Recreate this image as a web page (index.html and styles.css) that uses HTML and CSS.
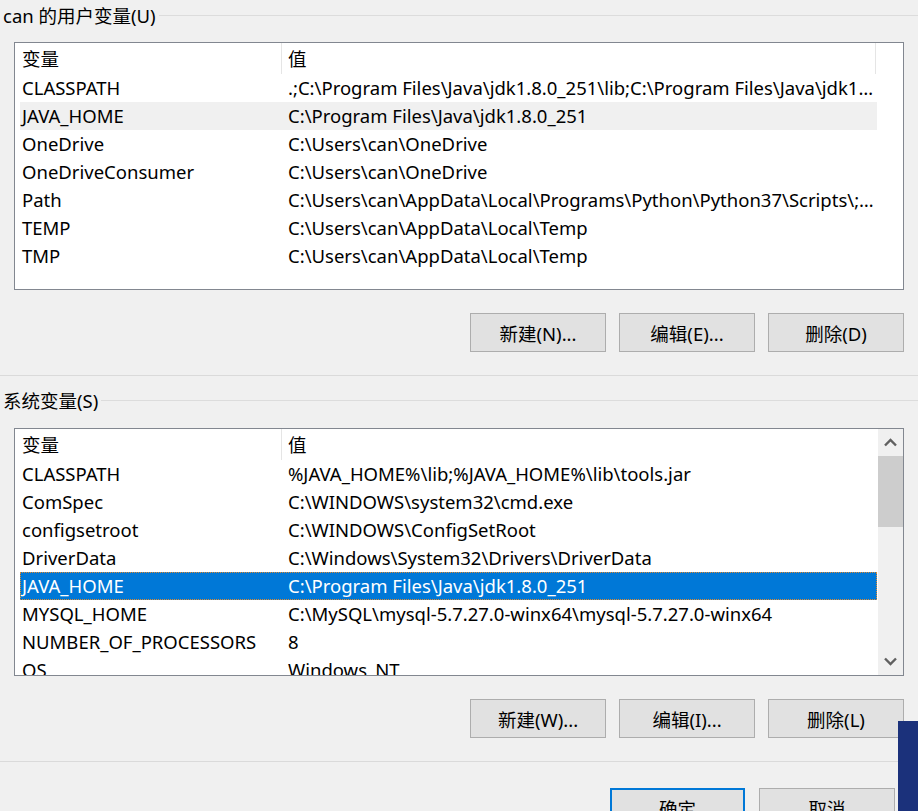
FILE: index.html
```html
<!DOCTYPE html>
<html lang="zh-CN">
<head>
<meta charset="utf-8">
<title>环境变量</title>
<link rel="stylesheet" href="styles.css">
</head>
<body>
<div class="group-title"><span class="gt-text">can 的用户变量(U)</span><span class="gt-line"></span></div>
<div class="listbox">
  <div class="list-main">
    <div class="row head"><div class="c1">变量</div><div class="c2">值</div></div>
    <div class="row"><div class="c1">CLASSPATH</div><div class="c2">.;C:\Program Files\Java\jdk1.8.0_251\lib;C:\Program Files\Java\jdk1.8.0_251\lib\tools.jar</div></div>
    <div class="row hover"><div class="c1">JAVA_HOME</div><div class="c2">C:\Program Files\Java\jdk1.8.0_251</div></div>
    <div class="row"><div class="c1">OneDrive</div><div class="c2">C:\Users\can\OneDrive</div></div>
    <div class="row"><div class="c1">OneDriveConsumer</div><div class="c2">C:\Users\can\OneDrive</div></div>
    <div class="row"><div class="c1">Path</div><div class="c2">C:\Users\can\AppData\Local\Programs\Python\Python37\Scripts\;C:\Users\can\AppData\Local\Programs\Python\Python37\</div></div>
    <div class="row"><div class="c1">TEMP</div><div class="c2">C:\Users\can\AppData\Local\Temp</div></div>
    <div class="row"><div class="c1">TMP</div><div class="c2">C:\Users\can\AppData\Local\Temp</div></div>
  </div>
  <div class="side-blank"></div>
</div>
<div class="btn-row">
  <button class="btn">新建(N)...</button>
  <button class="btn">编辑(E)...</button>
  <button class="btn">删除(D)</button>
</div>
<div class="sep sep-1"></div>
<div class="group-title gt-2"><span class="gt-text">系统变量(S)</span><span class="gt-line"></span></div>
<div class="listbox lb-2">
  <div class="list-main">
    <div class="row head"><div class="c1">变量</div><div class="c2 no-end">值</div></div>
    <div class="row"><div class="c1">CLASSPATH</div><div class="c2">%JAVA_HOME%\lib;%JAVA_HOME%\lib\tools.jar</div></div>
    <div class="row"><div class="c1">ComSpec</div><div class="c2">C:\WINDOWS\system32\cmd.exe</div></div>
    <div class="row"><div class="c1">configsetroot</div><div class="c2">C:\WINDOWS\ConfigSetRoot</div></div>
    <div class="row"><div class="c1">DriverData</div><div class="c2">C:\Windows\System32\Drivers\DriverData</div></div>
    <div class="row selected"><div class="c1">JAVA_HOME</div><div class="c2">C:\Program Files\Java\jdk1.8.0_251</div></div>
    <div class="row"><div class="c1">MYSQL_HOME</div><div class="c2">C:\MySQL\mysql-5.7.27.0-winx64\mysql-5.7.27.0-winx64</div></div>
    <div class="row"><div class="c1">NUMBER_OF_PROCESSORS</div><div class="c2">8</div></div>
    <div class="row"><div class="c1">OS</div><div class="c2">Windows_NT</div></div>
    <div class="row"><div class="c1">Path</div><div class="c2">C:\WINDOWS\system32</div></div>
  </div>
  <div class="scrollbar">
    <div class="sb-arrow">
      <svg width="13" height="9" viewBox="0 0 13 9"><path d="M1 7.5 L6.5 2 L12 7.5" fill="none" stroke="#606060" stroke-width="2.4"/></svg>
    </div>
    <div class="sb-thumb"></div>
    <div class="sb-track"></div>
    <div class="sb-arrow">
      <svg width="13" height="9" viewBox="0 0 13 9"><path d="M1 1.5 L6.5 7 L12 1.5" fill="none" stroke="#606060" stroke-width="2.4"/></svg>
    </div>
  </div>
</div>
<div class="btn-row">
  <button class="btn">新建(W)...</button>
  <button class="btn">编辑(I)...</button>
  <button class="btn">删除(L)</button>
</div>
<div class="sep sep-2"></div>
<div class="btn-row ok-row">
  <button class="btn btn-ok">确定</button>
  <button class="btn">取消</button>
</div>
<div class="overlay-window"></div>
</body>
</html>
```
FILE: styles.css
```css
html, body {
  margin: 0;
  padding: 0;
}
body {
  width: 918px;
  height: 811px;
  overflow: hidden;
  position: relative;
  background: #f0f0f0;
  color: #000;
  font-family: "Noto Sans", "Noto Sans CJK SC", sans-serif;
  font-size: 18.5px;
}
.group-title {
  display: flex;
  align-items: center;
  height: 32px;
  padding-left: 3px;
}
.gt-text {
  white-space: nowrap;
  line-height: 32px;
}
.gt-line {
  flex: 1;
  height: 0;
  border-top: 1px solid #dcdcdc;
  margin-left: 3px;
  margin-top: -2px;
}
.gt-2 {
  margin-top: 9px;
}
.listbox {
  box-sizing: border-box;
  margin: 10px 14px 0 14px;
  height: 248px;
  border: 1px solid #828790;
  background: #fff;
  display: flex;
  overflow: hidden;
}
.lb-2 {
  margin-top: 11px;
}
.list-main {
  width: 862px;
  overflow: hidden;
}
.side-blank {
  flex: 1;
}
.row {
  display: grid;
  grid-template-columns: 262px 594px;
  margin-left: 5px;
  height: 28px;
  line-height: 28px;
  white-space: nowrap;
}
.row .c1 {
  padding-left: 2px;
  overflow: hidden;
}
.row .c2 {
  padding-left: 6px;
  overflow: hidden;
  text-overflow: ellipsis;
  padding-right: 0;
}
.row.head {
  height: 31px;
  line-height: 31px;
}
.row.head .c1 {
  border-right: 1px solid #e5e5e5;
}
.row.head .c2 {
  border-right: 1px solid #e5e5e5;
}
.row.head .c2.no-end {
  border-right: none;
}
.row.hover {
  background: #f0f0f0;
}
.row.selected {
  background: #0078d7;
  color: #fff;
  outline: 1px dotted #e08a30;
  outline-offset: -1px;
}
.scrollbar {
  width: 25px;
  margin-left: 1px;
  background: #f0f0f0;
  display: flex;
  flex-direction: column;
}
.sb-arrow {
  height: 27px;
  display: flex;
  align-items: center;
  justify-content: center;
}
.sb-thumb {
  height: 71px;
  background: #cdcdcd;
}
.sb-track {
  flex: 1;
}
.btn-row {
  display: flex;
  justify-content: flex-end;
  gap: 13px;
  padding-right: 14px;
  margin-top: 23px;
}
.btn {
  box-sizing: border-box;
  width: 136px;
  height: 39px;
  margin: 0;
  padding: 0;
  background: #e1e1e1;
  border: 1px solid #adadad;
  font-family: inherit;
  font-size: 18.5px;
  color: #000;
}
.sep {
  height: 0;
  border-top: 1px solid #dadada;
}
.sep-1, .sep-2 {
  margin-top: 23px;
}
.ok-row {
  margin-top: 26px;
  padding-right: 23px;
  gap: 14px;
}
.btn-ok {
  width: 135px;
  border: 2px solid #0078d7;
}
.overlay-window {
  position: absolute;
  left: 898px;
  top: 721px;
  width: 20px;
  height: 90px;
  background: #1b317b;
}
```
